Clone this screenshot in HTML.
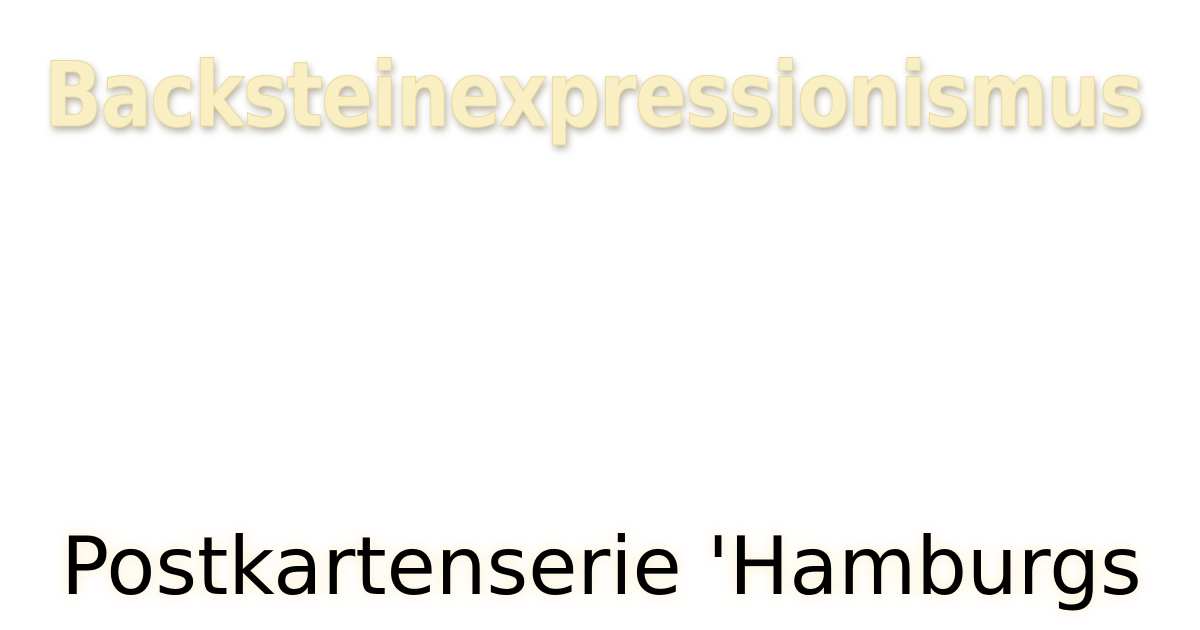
<!DOCTYPE html>
<html><head><style>
html,body{margin:0;width:1200px;height:630px;background:#fff;overflow:hidden}
.t{position:absolute;left:44px;top:44px;font-family:"DejaVu Sans","Liberation Sans",sans-serif;font-weight:bold;font-size:90px;line-height:1.16;color:#f9efc3;letter-spacing:-2px;text-shadow:2px 4px 8px rgba(120,110,80,.55);transform:scaleX(0.848);transform-origin:left top;white-space:nowrap;-webkit-text-stroke:1px #e6d9a0}
.b{position:absolute;left:61px;top:520px;font-family:"DejaVu Sans","Liberation Sans",sans-serif;font-size:80px;color:#000;white-space:nowrap;text-shadow:0 0 14px rgba(250,225,160,.6)}
</style></head><body>
<div class="t">Backsteinexpressionismus</div>
<div class="b">Postkartenserie 'Hamburgs</div>
</body></html>
